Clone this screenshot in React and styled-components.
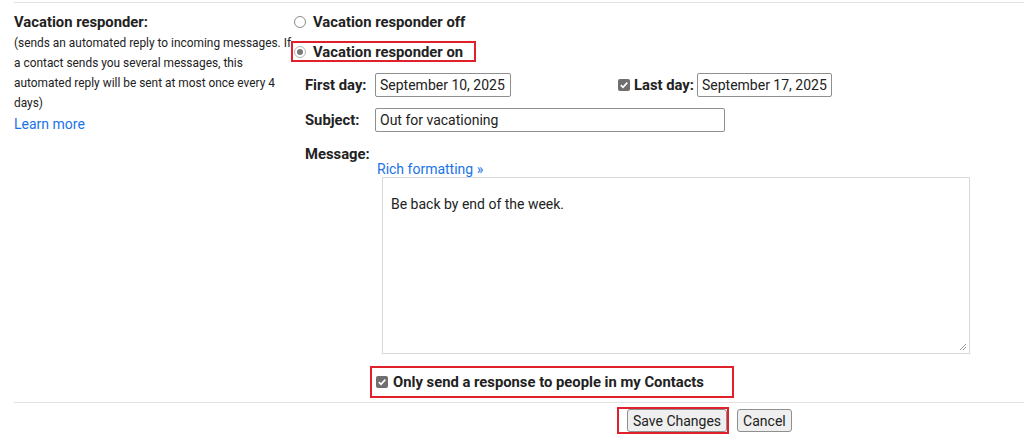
import React from "react";
import styled, { createGlobalStyle } from "styled-components";

const Global = createGlobalStyle`
  html, body { margin: 0; padding: 0; background: #fff; }
  body { font-family: Roboto, "Liberation Sans", Arial, sans-serif; color: #222; }
  * { box-sizing: border-box; }
`;

const Page = styled.div`
  padding: 2px 0 0 14px;
  width: 1024px;
`;

const Section = styled.div`
  border-top: 1px solid #e3e3e3;
  display: flex;
`;

const LeftCol = styled.div`
  width: 278px;
  flex: none;
  padding-top: 9px;
`;

const Title = styled.div`
  font-size: 14.8px;
  font-weight: 700;
  line-height: 20px;
`;

const Desc = styled.div`
  font-size: 11.9px;
  line-height: 20px;
  margin-top: 1px;
  width: 280px;
`;

const Link = styled.a`
  display: inline-block;
  color: #1a73e8;
  font-size: 14px;
  line-height: 20px;
  margin-top: 1px;
  text-decoration: none;
`;

const RightCol = styled.div`
  flex: 1;
  padding-top: 9px;
  display: flex;
  flex-direction: column;
`;

const OptionRow = styled.div`
  display: flex;
  align-items: center;
  gap: 7px;
  height: ${(p) => (p.$boxed ? "21px" : "20px")};
  padding-left: 1px;
  font-size: 14.8px;
  font-weight: 700;
  width: ${(p) => (p.$boxed ? "185px" : "auto")};
  border: ${(p) => (p.$boxed ? "2px solid #e0202a" : "2px solid transparent")};
  margin-left: -1px;
  margin-top: ${(p) => p.$mt || 0}px;
`;

const Radio = styled.span`
  width: 12px;
  height: 12px;
  border-radius: 50%;
  border: 1px solid ${(p) => (p.$on ? "#b5b5b5" : "#8a8a8a")};
  background: #fff;
  flex: none;
  display: flex;
  align-items: center;
  justify-content: center;
  &::after {
    content: "";
    width: 6px;
    height: 6px;
    border-radius: 50%;
    background: ${(p) => (p.$on ? "#7a7a7a" : "transparent")};
  }
`;

const Fields = styled.div`
  padding-left: 13px;
  display: flex;
  flex-direction: column;
`;

const FieldRow = styled.div`
  display: flex;
  align-items: center;
  margin-top: ${(p) => p.$mt || 0}px;
`;

const Label = styled.div`
  width: 70px;
  flex: none;
  font-size: 14.8px;
  font-weight: 700;
`;

const TextBox = styled.div`
  width: ${(p) => p.$w}px;
  height: 24px;
  border: 1px solid #8f8f8f;
  border-radius: 2px;
  font-size: 14px;
  font-weight: 400;
  padding: 0 4px;
  display: flex;
  align-items: center;
  white-space: nowrap;
`;

const LastDay = styled.div`
  display: flex;
  align-items: center;
  margin-left: 107px;
  font-size: 14.8px;
  font-weight: 700;
`;

const LastLabel = styled.span`
  margin: 0 3px 0 4px;
`;

const Check = styled.span`
  width: 12px;
  height: 12px;
  border-radius: 2px;
  background: #6f6f6f;
  flex: none;
  display: flex;
  align-items: center;
  justify-content: center;
`;

const CheckMark = () => (
  <svg width="10" height="10" viewBox="0 0 10 10">
    <path d="M1.8 5.2 L4 7.3 L8.3 2.6" fill="none" stroke="#fff" strokeWidth="1.7" />
  </svg>
);

const MessageLabel = styled(Label)`
  margin-top: 13px;
  line-height: 18px;
`;

const RichLink = styled.a`
  color: #1a73e8;
  font-size: 14px;
  line-height: 16px;
  margin-left: 72px;
  margin-top: -2px;
  text-decoration: none;
`;

const Editor = styled.div`
  margin-left: 77px;
  width: 588px;
  height: 177px;
  border: 1px solid #d8d8d8;
  position: relative;
  font-size: 14px;
  padding: 18px 8px;
`;

const Grip = styled.svg`
  position: absolute;
  right: 2px;
  bottom: 2px;
`;

const ContactsBox = styled.div`
  margin-left: 65px;
  margin-top: 12px;
  width: 364px;
  height: 32px;
  border: 2px solid #e0202a;
  display: flex;
  align-items: center;
  gap: 5px;
  padding-left: 4px;
  font-size: 14.8px;
  font-weight: 700;
`;

const Divider = styled.div`
  border-top: 1px solid #e3e3e3;
  margin-top: 4px;
`;

const Buttons = styled.div`
  display: flex;
  align-items: center;
  padding-left: 603px;
  margin-top: 4px;
  gap: 8px;
`;

const SaveWrap = styled.div`
  border: 2px solid #e0202a;
  padding: 0 0 0 8px;
  display: flex;
`;

const Button = styled.button`
  font-family: Roboto, "Liberation Sans", Arial, sans-serif;
  font-size: 14px;
  height: 23px;
  padding: 0 5px;
  background: #efefef;
  border: 1px solid #8f8f8f;
  border-radius: 3px;
  color: #222;
`;

export default function App() {
  return (
    <>
      <Global />
      <Page>
        <Section>
          <LeftCol>
            <Title>Vacation responder:</Title>
            <Desc>
              (sends an automated reply to incoming messages. If a contact sends you several messages, this
              automated reply will be sent at most once every 4 days)
            </Desc>
            <Link href="#">Learn more</Link>
          </LeftCol>
          <RightCol>
            <OptionRow>
              <Radio />
              Vacation responder off
            </OptionRow>
            <OptionRow $boxed $mt={9}>
              <Radio $on />
              Vacation responder on
            </OptionRow>
            <Fields>
              <FieldRow $mt={11}>
                <Label>First day:</Label>
                <TextBox $w={136}>September 10, 2025</TextBox>
                <LastDay>
                  <Check>
                    <CheckMark />
                  </Check>
                  <LastLabel>Last day:</LastLabel>
                  <TextBox $w={135}>September 17, 2025</TextBox>
                </LastDay>
              </FieldRow>
              <FieldRow $mt={11}>
                <Label>Subject:</Label>
                <TextBox $w={350}>Out for vacationing</TextBox>
              </FieldRow>
              <MessageLabel>Message:</MessageLabel>
              <RichLink href="#">Rich formatting »</RichLink>
              <Editor>
                Be back by end of the week.
                <Grip width="8" height="8" viewBox="0 0 8 8">
                  <path d="M7 1 L1 7 M7 4 L4 7" stroke="#9a9a9a" strokeWidth="1" />
                </Grip>
              </Editor>
              <ContactsBox>
                <Check>
                  <CheckMark />
                </Check>
                Only send a response to people in my Contacts
              </ContactsBox>
            </Fields>
          </RightCol>
        </Section>
        <Divider />
        <Buttons>
          <SaveWrap>
            <Button>Save Changes</Button>
          </SaveWrap>
          <Button>Cancel</Button>
        </Buttons>
      </Page>
    </>
  );
}
